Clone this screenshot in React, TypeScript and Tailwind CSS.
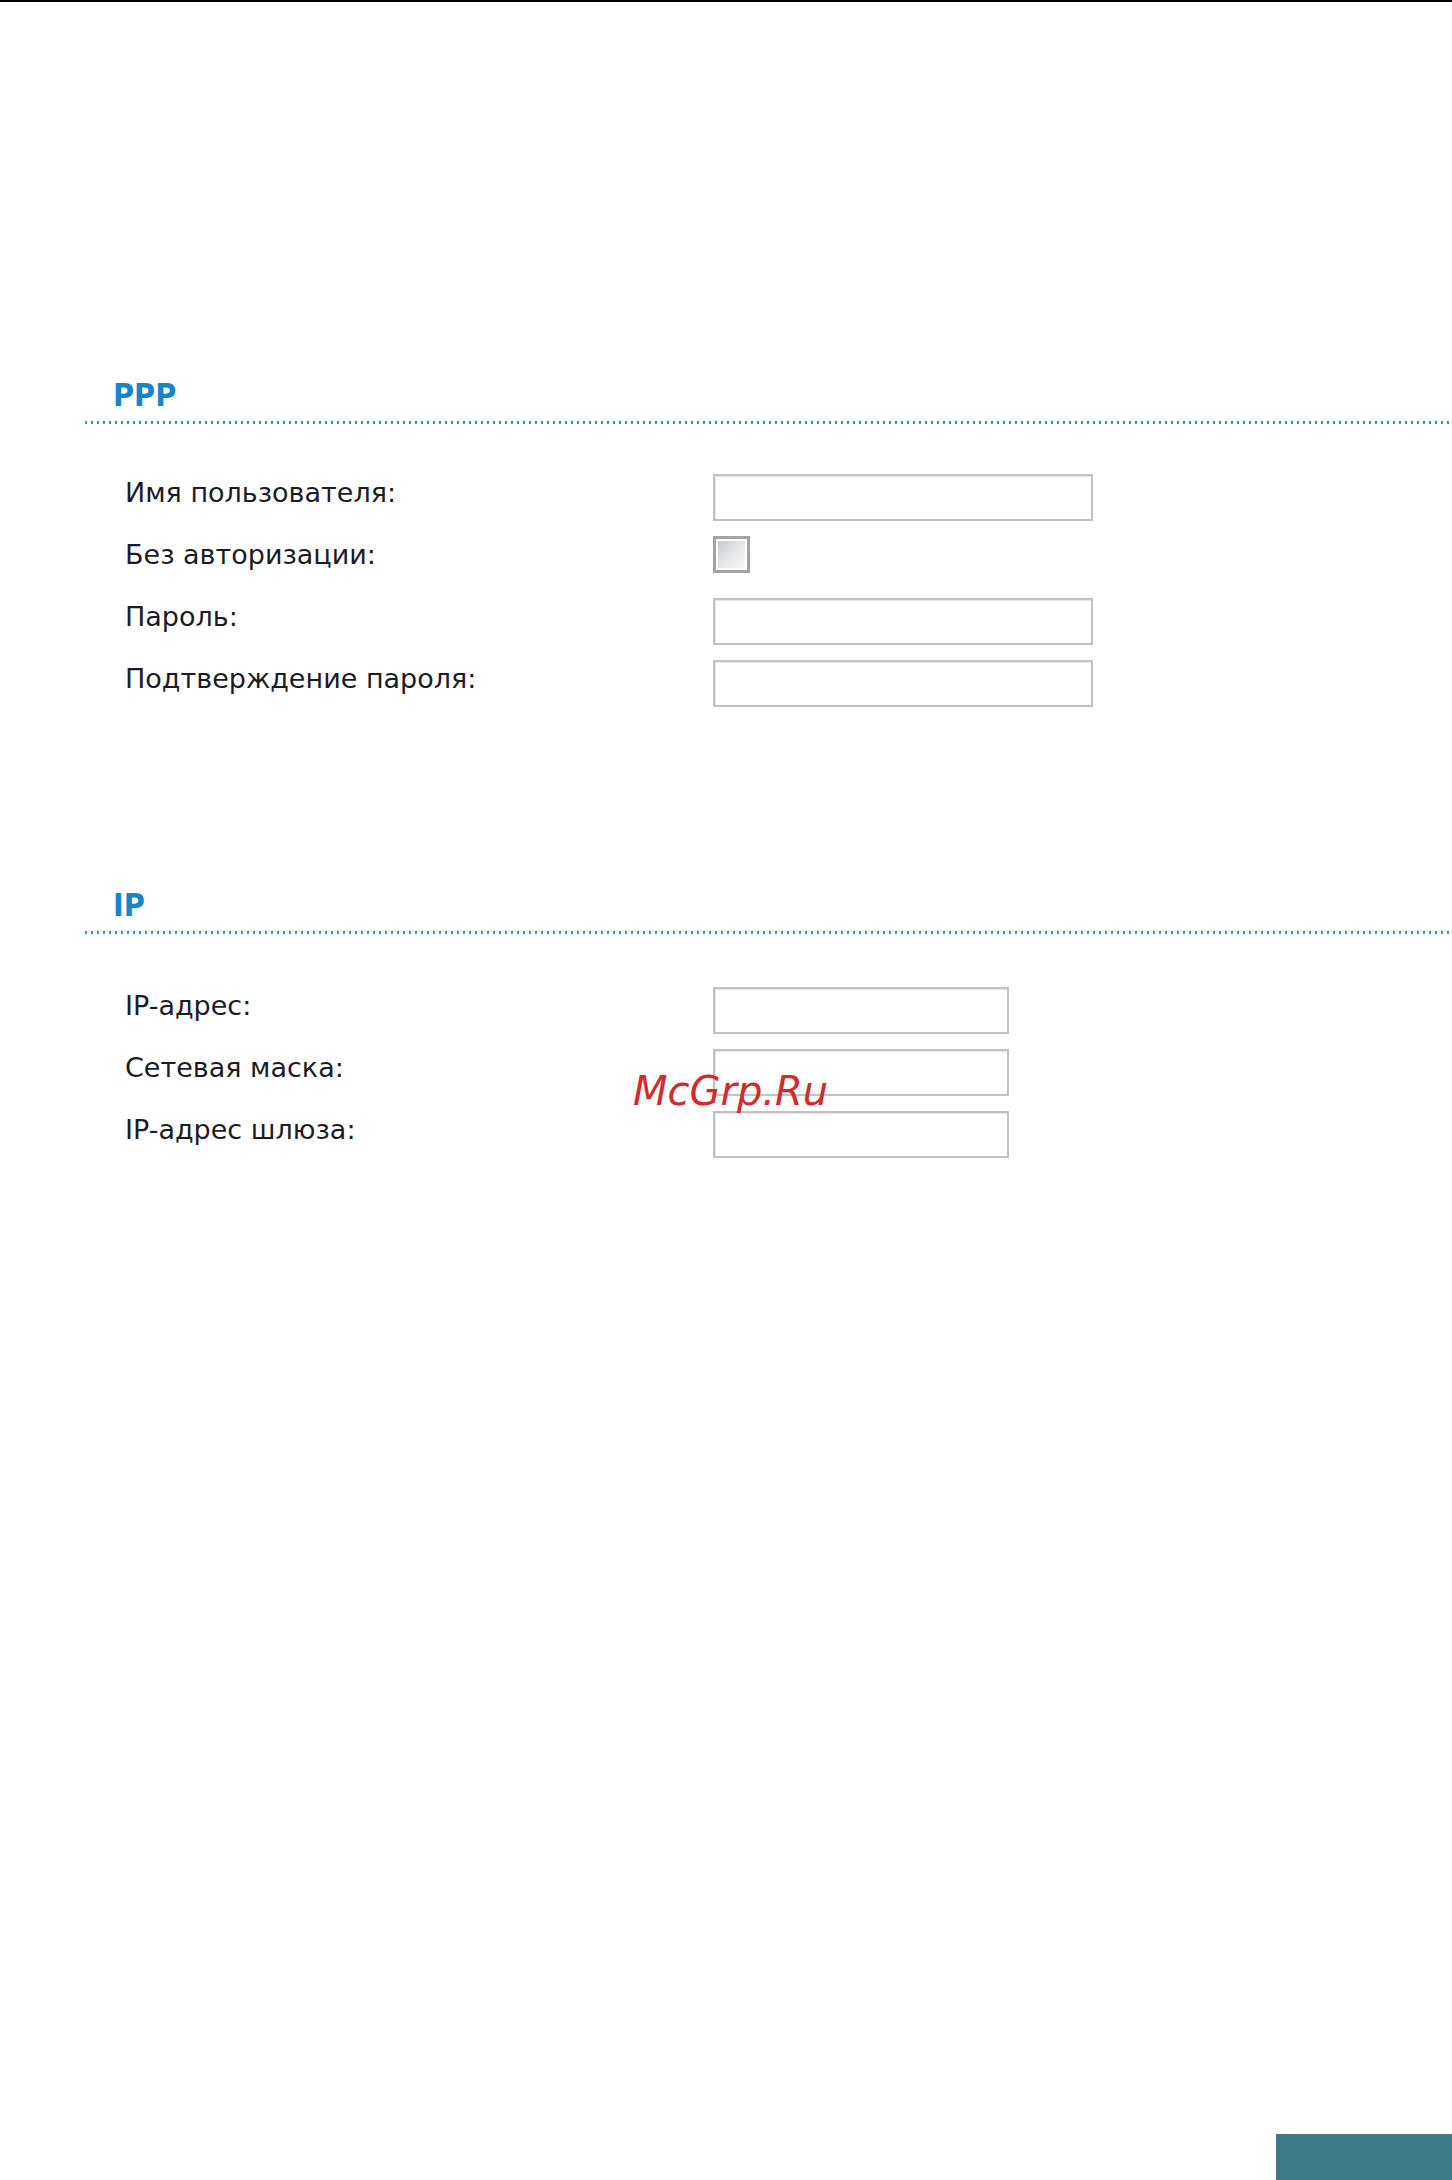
import React from "react";

type Field = { label: string; kind: "text" | "checkbox" };

const pppFields: Field[] = [
  { label: "Имя пользователя:", kind: "text" },
  { label: "Без авторизации:", kind: "checkbox" },
  { label: "Пароль:", kind: "text" },
  { label: "Подтверждение пароля:", kind: "text" },
];

const ipFields: Field[] = [
  { label: "IP-адрес:", kind: "text" },
  { label: "Сетевая маска:", kind: "text" },
  { label: "IP-адрес шлюза:", kind: "text" },
];

function SectionTitle({ children }: { children: React.ReactNode }) {
  return (
    <div>
      <h2 className="ml-[30px] text-[32px] leading-[32px] font-bold text-[#1a84c8] [font-family:'DejaVu_Sans_Condensed','Liberation_Sans',sans-serif]">
        {children}
      </h2>
      {/* dotted rule under the heading */}
      <div className="mt-[10px] h-[3px] w-full bg-[radial-gradient(circle,#2a8fd0_1.1px,transparent_1.5px)] bg-[length:6px_3px] bg-repeat-x" />
    </div>
  );
}

function TextBox({ width }: { width: string }) {
  return (
    <div
      className={`${width} h-[47px] border-2 border-[#c2c2c2] bg-white shadow-[inset_1px_1px_0_#e6e6e6]`}
    />
  );
}

function CheckBox() {
  return (
    <div className="h-[37px] w-[37px] border-[3px] border-[#a3a3a3] bg-white p-[2px]">
      <div className="h-full w-full bg-gradient-to-br from-[#c5c9cf] via-[#e4e6e9] to-[#fafafa]" />
    </div>
  );
}

function FieldRow({ field, boxWidth }: { field: Field; boxWidth: string }) {
  return (
    <div className="flex h-[62px] items-start">
      <span className="w-[588px] pt-[5px] text-[27px] leading-[27px] text-[#1c1c26] [font-family:'DejaVu_Sans',sans-serif]">
        {field.label}
      </span>
      {field.kind === "checkbox" ? <CheckBox /> : <TextBox width={boxWidth} />}
    </div>
  );
}

export default function App() {
  return (
    <div className="relative flex h-[2180px] w-[1452px] flex-col overflow-hidden border-t-2 border-black bg-white">
      <div className="pl-[83px]">
        {/* PPP */}
        <div className="mt-[377px]">
          <SectionTitle>PPP</SectionTitle>
        </div>
        <div className="mt-[50px] ml-[42px]">
          {pppFields.map((f) => (
            <FieldRow key={f.label} field={f} boxWidth="w-[380px]" />
          ))}
        </div>

        {/* IP */}
        <div className="mt-[167px]">
          <SectionTitle>IP</SectionTitle>
        </div>
        <div className="mt-[53px] ml-[42px]">
          {ipFields.map((f) => (
            <FieldRow key={f.label} field={f} boxWidth="w-[296px]" />
          ))}
        </div>
      </div>

      {/* footer tab */}
      <div className="mt-auto flex justify-end">
        <div className="h-[46px] w-[176px] bg-[#3d7a87]" />
      </div>

      <span className="absolute left-[633px] top-[1069px] text-[40px] leading-[40px] italic text-[#d42a2c] [font-family:'DejaVu_Sans',sans-serif]">
        McGrp.Ru
      </span>
    </div>
  );
}
